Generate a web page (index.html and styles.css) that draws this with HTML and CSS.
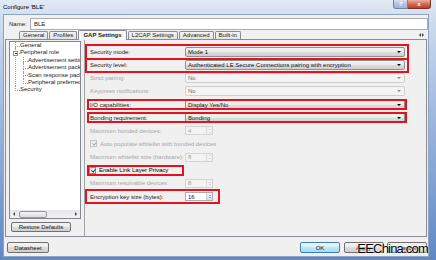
FILE: index.html
```html
<!DOCTYPE html>
<html lang="en">
<head>
    <meta charset="UTF-8">
    <title>Configure 'BLE'</title>
    <link rel="stylesheet" href="styles.css">
</head>
<body>
    <div class="window">
        <div class="titlebar">
            <span class="title">Configure 'BLE'</span>
            <span class="tb-btn help">?</span>
            <span class="tb-btn close">x</span>
        </div>

        <div class="client">
            <div class="name-row">
                <span class="name-label">Name:</span>
                <div class="name-input">BLE</div>
            </div>

            <div class="tabs">
                <span class="tab">General</span>
                <span class="tab">Profiles</span>
                <span class="tab active">GAP Settings</span>
                <span class="tab">L2CAP Settings</span>
                <span class="tab">Advanced</span>
                <span class="tab">Built-in</span>
                <span class="tab-scroll"><i class="arr-left"></i><i class="arr-right"></i></span>
            </div>

            <div class="tab-panel">
                <div class="side">
                    <div class="tree">
                        <ul class="tree-list">
                            <li>General</li>
                            <li><span class="exp"></span>Peripheral role
                                <ul>
                                    <li>Advertisement settings</li>
                                    <li>Advertisement packet</li>
                                    <li>Scan response packet</li>
                                    <li class="last">Peripheral preferred connection parameters</li>
                                </ul>
                            </li>
                            <li class="last">Security</li>
                        </ul>
                        <div class="hscroll">
                            <span class="sb-arrow"><i class="arr-left"></i></span>
                            <span class="sb-thumb"></span>
                            <span class="sb-arrow end"><i class="arr-right"></i></span>
                        </div>
                    </div>
                    <div class="btn restore">Restore Defaults</div>
                </div>

                <div class="settings">
                    <div class="row hl">
                        <span class="lbl">Security mode:</span>
                        <div class="select">Mode 1</div>
                    </div>
                    <div class="row hl">
                        <span class="lbl">Security level:</span>
                        <div class="select">Authenticated LE Secure Connections pairing with encryption</div>
                    </div>
                    <div class="row off">
                        <span class="lbl">Strict pairing:</span>
                        <div class="select">No</div>
                    </div>
                    <div class="row off">
                        <span class="lbl">Keypress notifications:</span>
                        <div class="select">No</div>
                    </div>
                    <div class="row hl tight">
                        <span class="lbl">I/O capabilities:</span>
                        <div class="select">Display Yes/No</div>
                    </div>
                    <div class="row hl tight">
                        <span class="lbl">Bonding requirement:</span>
                        <div class="select">Bonding</div>
                    </div>
                    <div class="row off">
                        <span class="lbl">Maximum bonded devices:</span>
                        <div class="spin">4<span class="spin-btns"><i class="arr-up"></i><i class="arr-down"></i></span></div>
                    </div>
                    <div class="row off">
                        <span class="check"></span>
                        <span>Auto populate whitelist with bonded devices</span>
                    </div>
                    <div class="row off">
                        <span class="lbl">Maximum whitelist size (hardware):</span>
                        <div class="spin">8<span class="spin-btns"><i class="arr-up"></i><i class="arr-down"></i></span></div>
                    </div>
                    <div class="row hl tight privacy">
                        <span class="check"></span>
                        <span>Enable Link Layer Privacy</span>
                    </div>
                    <div class="row off">
                        <span class="lbl">Maximum resolvable devices:</span>
                        <div class="spin">8<span class="spin-btns"><i class="arr-up"></i><i class="arr-down"></i></span></div>
                    </div>
                    <div class="row hl keysize">
                        <span class="lbl">Encryption key size (bytes):</span>
                        <div class="spin">16<span class="spin-btns"><i class="arr-up"></i><i class="arr-down"></i></span></div>
                    </div>
                </div>
            </div>

            <div class="footer">
                <div class="btn wide">Datasheet</div>
                <div class="btn default">OK</div>
                <div class="btn">Apply</div>
                <div class="btn">Cancel</div>
            </div>

            <div class="watermark">EEChina.com</div>
        </div>
    </div>
</body>
</html>
```

FILE: styles.css
```css
body {
    margin: 0;
    width: 436px;
    height: 260px;
    overflow: hidden;
    font-family: "Liberation Sans", Arial, sans-serif;
    font-size: 6px;
    color: #1a1a1a;
}
.window {
    width: 436px;
    height: 260px;
    display: flex;
    flex-direction: column;
    background: linear-gradient(#d8e4f2, #a9c1e3 35%, #5f88c5);
}

/* title bar */
.titlebar {
    height: 14px;
    flex-shrink: 0;
    display: flex;
    align-items: flex-start;
    background: linear-gradient(#e2ebf6, #d3e0f0);
}
.title {
    padding: 3px 0 0 3px;
    line-height: 8px;
    color: #000;
}
.tb-btn {
    height: 9px;
    box-sizing: border-box;
    display: flex;
    align-items: center;
    justify-content: center;
    color: #fff;
    font-weight: bold;
    font-size: 6px;
}
.help {
    margin-left: auto;
    width: 15px;
    border: 1px solid #6f84a6;
    border-top: 0;
    border-radius: 0 0 0 3px;
    background: linear-gradient(#d6e0ec, #b3c5dc 50%, #9fb5d2);
}
.close {
    width: 23px;
    margin-right: 5px;
    border: 1px solid #7b3328;
    border-top: 0;
    border-left: 0;
    border-radius: 0 0 3px 0;
    background: linear-gradient(#eab0a2, #d46a55 50%, #c23b2b);
}

/* dialog body */
.client {
    flex: 1;
    margin: 0 7px 3px 3px;
    border: 1px solid #8ea3c0;
    background: #f0f0f0;
    position: relative;
    display: flex;
    flex-direction: column;
}
.name-row {
    display: flex;
    align-items: center;
    padding: 3px 0 0 5px;
}
.name-label {
    width: 21px;
}
.name-input {
    flex: 1;
    height: 12px;
    box-sizing: border-box;
    border: 1px solid #abadb3;
    background: #fff;
    padding-left: 3px;
    line-height: 10px;
}

/* tabs */
.tabs {
    height: 8px;
    margin-top: 1px;
    padding-left: 15px;
    display: flex;
    align-items: flex-end;
}
.tab {
    height: 8px;
    box-sizing: border-box;
    padding: 0 3px;
    margin-right: 1px;
    border: 1px solid #898c95;
    border-bottom: 0;
    border-radius: 2px 2px 0 0;
    background: linear-gradient(#f4f4f4, #e2e2e2);
    line-height: 7px;
}
.tab.active {
    height: 10px;
    margin-bottom: -1px;
    padding: 0 4px;
    font-weight: bold;
    background: #f7f7f7;
    position: relative;
    line-height: 9px;
}
.tab-scroll {
    margin: 0 4px 2px auto;
    display: flex;
    gap: 1px;
}
.arr-left, .arr-right, .arr-up, .arr-down {
    display: block;
    width: 0;
    height: 0;
}
.arr-left {
    border-top: 2px solid transparent;
    border-bottom: 2px solid transparent;
    border-right: 2px solid #444;
}
.arr-right {
    border-top: 2px solid transparent;
    border-bottom: 2px solid transparent;
    border-left: 2px solid #444;
}
.arr-up {
    border-left: 1.5px solid transparent;
    border-right: 1.5px solid transparent;
    border-bottom: 1.5px solid #4d6185;
}
.arr-down {
    border-left: 1.5px solid transparent;
    border-right: 1.5px solid transparent;
    border-top: 1.5px solid #4d6185;
}

.tab-panel {
    height: 198px;
    box-sizing: border-box;
    margin: 0 1px;
    border: 1px solid #898c95;
    display: flex;
}

/* left tree */
.side {
    width: 78px;
    box-sizing: border-box;
    padding: 1px 3px 0;
}
.tree {
    height: 178px;
    box-sizing: border-box;
    border: 1px solid #828790;
    background: #fff;
    display: flex;
    flex-direction: column;
    overflow: hidden;
}
.tree-list {
    flex: 1;
    list-style: none;
    margin: 0;
    padding: 0;
    line-height: 7.4px;
    white-space: nowrap;
}
.tree-list li {
    position: relative;
    padding-left: 10px;
}
.tree-list ul {
    list-style: none;
    margin: 0 0 0 -2px;
    padding: 0;
}
.tree-list li::before {
    content: '';
    position: absolute;
    left: 5px;
    top: 0;
    width: 4px;
    height: 3.7px;
    border-left: 1px dotted #a0a0a0;
    border-bottom: 1px dotted #a0a0a0;
}
.tree-list li::after {
    content: '';
    position: absolute;
    left: 5px;
    top: 4.7px;
    bottom: 0;
    border-left: 1px dotted #a0a0a0;
}
.tree-list li.last::after {
    display: none;
}
.exp {
    position: absolute;
    left: 3px;
    top: 1.3px;
    width: 5px;
    height: 5px;
    box-sizing: border-box;
    border: 1px solid #919191;
    background: #fff;
    z-index: 1;
}
.exp::after {
    content: '';
    position: absolute;
    left: 0.5px;
    top: 1px;
    width: 2px;
    height: 1px;
    background: #333;
}
.hscroll {
    height: 8px;
    display: flex;
    align-items: center;
    background: linear-gradient(#e6e6e6, #f2f2f2);
}
.sb-arrow {
    width: 8px;
    height: 8px;
    display: flex;
    align-items: center;
    justify-content: center;
}
.sb-arrow.end {
    margin-left: auto;
}
.sb-thumb {
    width: 28px;
    height: 7px;
    margin-left: 1px;
    box-sizing: border-box;
    border: 1px solid #979797;
    border-radius: 2px;
    background: linear-gradient(#f3f3f3, #dcdcdc);
}

.btn {
    height: 11px;
    width: 40px;
    box-sizing: border-box;
    border: 1px solid #707070;
    border-radius: 2px;
    background: linear-gradient(#f2f2f2, #ebebeb 50%, #dddddd 50%, #cfcfcf);
    display: flex;
    align-items: center;
    justify-content: center;
    color: #111;
}
.restore {
    width: 60px;
    height: 10px;
    margin: 3px 0 0 2px;
}

/* right pane */
.settings {
    flex: 1;
    border-left: 1px solid #a3a3a3;
    padding: 5.4px 0 0 1px;
    display: flex;
    flex-direction: column;
    align-items: flex-start;
}
.row {
    width: 322px;
    height: 13.15px;
    box-sizing: border-box;
    padding: 0 3px 0 4px;
    display: flex;
    align-items: center;
    flex-shrink: 0;
}
.row.hl {
    outline: 2px solid #e3121b;
    outline-offset: -1px;
}
.row.tight {
    outline-offset: -3px;
}
.row.privacy {
    width: 99px;
    padding-left: 3px;
    color: #000;
}
.row.keysize {
    width: 133px;
}
.row.off {
    color: #a7a7a7;
}
.lbl {
    width: 95px;
    flex-shrink: 0;
}
.select {
    flex: 1;
    height: 10px;
    box-sizing: border-box;
    border: 1px solid #8e8f8f;
    border-radius: 2px;
    padding-left: 2px;
    background: linear-gradient(#f2f2f2, #ebebeb 50%, #dddddd 50%, #cfcfcf);
    display: flex;
    align-items: center;
    color: #111;
}
.select::after {
    content: '';
    margin: 0 3px 0 auto;
    border-left: 2px solid transparent;
    border-right: 2px solid transparent;
    border-top: 2px solid #000;
}
.off .select {
    border-color: #cfcfcf;
    background: #f4f4f4;
    color: #6d6d6d;
}
.off .select::after {
    border-top-color: #8a8a8a;
}
.spin {
    width: 28px;
    height: 9px;
    box-sizing: border-box;
    border: 1px solid #abadb3;
    background: #fff;
    padding-left: 2px;
    display: flex;
    align-items: center;
    color: #111;
}
.off .spin {
    border-color: #d3d3d3;
    background: #f4f4f4;
    color: #a0a0a0;
}
.spin-btns {
    margin-left: auto;
    width: 6px;
    height: 100%;
    box-sizing: border-box;
    border-left: 1px solid #c9cfd8;
    background: linear-gradient(#eef2f8, #d8e0ec);
    display: flex;
    flex-direction: column;
    align-items: center;
    justify-content: space-evenly;
}
.off .spin-btns {
    background: #f2f2f2;
    border-left-color: #dcdcdc;
}
.off .arr-up { border-bottom-color: #b5b5b5; }
.off .arr-down { border-top-color: #b5b5b5; }
.check {
    width: 7px;
    height: 7px;
    box-sizing: border-box;
    margin-right: 3px;
    border: 1px solid #8f8f8f;
    background: linear-gradient(#e9e9e9, #fafafa);
    position: relative;
    flex-shrink: 0;
}
.check::after {
    content: '';
    position: absolute;
    left: 1.5px;
    top: 0;
    width: 1.5px;
    height: 3px;
    border-right: 1px solid #2a3e6b;
    border-bottom: 1px solid #2a3e6b;
    transform: rotate(40deg);
}
.off .check {
    border-color: #c4c4c4;
}
.off .check::after {
    border-color: #a8a8a8;
}

/* bottom buttons */
.footer {
    flex: 1;
    display: flex;
    align-items: flex-start;
    gap: 3.5px;
    padding: 5px 1px 0 3px;
}
.footer .wide {
    width: 42px;
    margin-right: auto;
}
.btn.default {
    border-color: #3c7fb1;
    background: linear-gradient(#eaf6fd, #d9f0fc 50%, #bee6fd 50%, #a7d9f5);
}

.watermark {
    position: absolute;
    right: 0;
    bottom: 1px;
    font-size: 13px;
    line-height: 13px;
    letter-spacing: -0.8px;
    color: #000;
    text-shadow: 0 0 1px #fff, 0 0 2px #fff;
}
```
